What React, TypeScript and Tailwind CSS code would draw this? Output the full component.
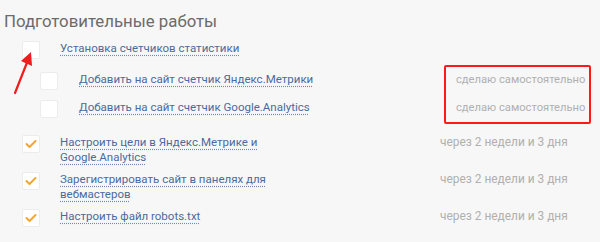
import React from 'react';

type Row = {
  text: string;
  status: string;
  checked?: boolean;
  sub?: boolean;
  mt: string;
};

const rows: Row[] = [
  { text: 'Установка счетчиков статистики', status: '', mt: 'mt-[9px]' },
  { text: 'Добавить на сайт счетчик Яндекс.Метрики', status: 'сделаю самостоятельно', sub: true, mt: 'mt-[13px]' },
  { text: 'Добавить на сайт счетчик Google.Analytics', status: 'сделаю самостоятельно', sub: true, mt: 'mt-[10px]' },
  { text: 'Настроить цели в Яндекс.Метрике и Google.Analytics', status: 'через 2 недели и 3 дня', checked: true, mt: 'mt-[17px]' },
  { text: 'Зарегистрировать сайт в панелях для вебмастеров', status: 'через 2 недели и 3 дня', checked: true, mt: 'mt-[7px]' },
  { text: 'Настроить файл robots.txt', status: 'через 2 недели и 3 дня', checked: true, mt: 'mt-[7px]' },
];

const CheckBox = ({ checked }: { checked?: boolean }) => (
  <div className="w-[18px] h-[18px] shrink-0 bg-white border border-[#ececec] rounded-[2px] flex items-center justify-center">
    {checked && (
      <svg width="12" height="10" viewBox="0 0 12 10" fill="none">
        <path d="M1.5 5 L4.5 8 L10.5 2" stroke="#f5a631" strokeWidth="2" strokeLinecap="round" strokeLinejoin="round" />
      </svg>
    )}
  </div>
);

export default function App() {
  return (
    <div
      className="relative w-[600px] h-[242px] overflow-hidden bg-[#f7f7f7] text-[11.5px] leading-[15px]"
      style={{ fontFamily: 'Roboto, "Open Sans", sans-serif' }}
    >
      <h2 className="pl-[4px] pt-[10px] text-[16.8px] leading-[22px] text-[#6b6b6b]">Подготовительные работы</h2>

      <div className="flex flex-col">
        {rows.map((r, i) => (
          <div key={i} className={`flex items-start ${r.mt} ${r.sub ? 'pl-[40px]' : 'pl-[22px]'}`}>
            <CheckBox checked={r.checked} />
            <div className={`shrink-0 ${r.sub ? 'ml-[21px] w-[377px]' : 'ml-[20px] w-[380px]'}`}>
              <div className={r.sub ? '' : 'max-w-[212px]'}>
                <span className="text-[#4b6a9e] underline decoration-dotted decoration-[#6f89b8] underline-offset-[3px]">
                  {r.text}
                </span>
              </div>
            </div>
            <span className={`text-[#b0b0b0] whitespace-nowrap ${r.sub ? 'text-[11.2px]' : 'text-[11.9px]'}`}>
              {r.status}
            </span>
          </div>
        ))}
      </div>

      {/* annotation overlay */}
      <div className="absolute left-[444px] top-[65px] w-[147px] h-[59px] border-2 border-[#ff1a1a] rounded-[2px]" />
      <svg className="absolute left-[10px] top-[48px]" width="30" height="50" viewBox="0 0 30 50">
        <path d="M5 45 L18 12" stroke="#f01d1d" strokeWidth="2.2" strokeLinecap="round" />
        <path d="M11 13 L21 4 L22 18 Z" fill="#f01d1d" />
      </svg>
    </div>
  );
}
